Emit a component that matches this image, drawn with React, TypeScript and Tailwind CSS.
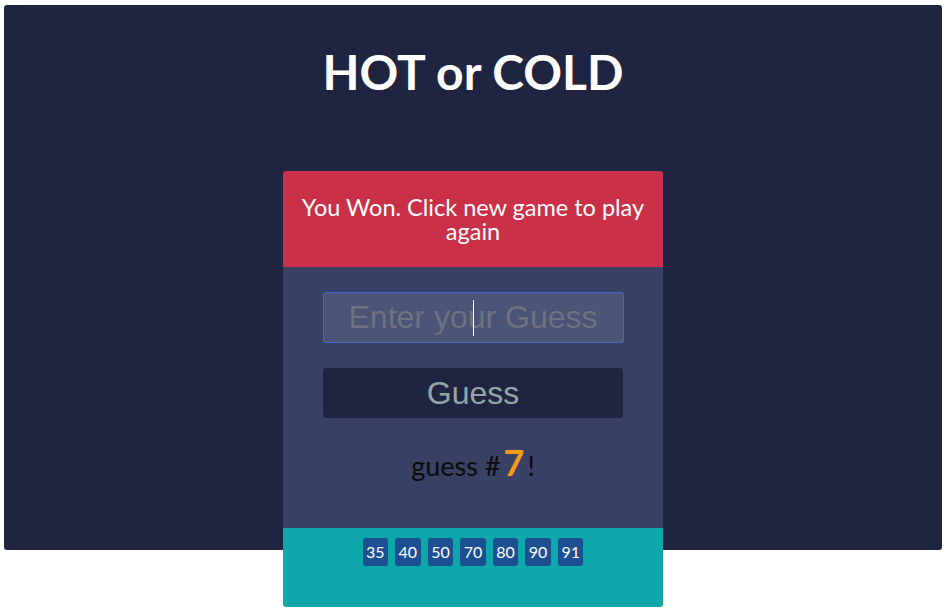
import React from "react";

export default function App() {
  const guesses = [35, 40, 50, 70, 80, 90, 91];
  return (
    <div className="min-h-[615px] w-[948px] bg-white pt-[5px] pl-[4px]" style={{ fontFamily: "Lato, 'Open Sans', sans-serif" }}>
      <div className="h-[545px] w-[938px] rounded-[3px] bg-[#1f2540] pt-[37px] flex flex-col items-center">
        <h1 className="shrink-0 text-[48px] leading-[60px] font-bold text-white text-center">HOT or COLD</h1>
        <div className="shrink-0 mt-[69px] w-[380px] rounded-[3px] overflow-hidden flex flex-col">
          <div className="shrink-0 h-[96px] bg-[#cb3049] flex items-center justify-center px-[16px]">
            <p className="text-[23.5px] leading-[24px] text-white text-center">You Won. Click new game to play again</p>
          </div>
          <div className="shrink-0 h-[261px] bg-[#394164] flex flex-col items-center pt-[25px]">
            <div className="relative w-[301px] h-[51px]">
              <input
                type="text"
                placeholder="Enter your Guess"
                className="w-full h-full rounded-[3px] border border-[#3d6ccc] bg-[#4c5578] text-center text-[32px] text-white placeholder:text-[#6e7281] caret-transparent outline-none"
                style={{ fontFamily: "'Liberation Sans', Arial, sans-serif" }}
              />
              <div className="absolute left-[150px] top-[8px] h-[36px] w-[1px] bg-white" />
            </div>
            <button
              className="mt-[25px] w-[300px] h-[50px] rounded-[3px] bg-[#1f2540] text-[32px] text-[#95a5a6] leading-none"
              style={{ fontFamily: "'Liberation Sans', Arial, sans-serif" }}
            >
              Guess
            </button>
            <div className="mt-[24px] h-[48px] leading-[48px] text-[27px] text-[#0a0a0a] text-center">
              guess #<span className="ml-[3px] mr-[3px] text-[36px] leading-none font-bold text-[#f39c12]">7</span>!
            </div>
          </div>
          <div className="shrink-0 h-[79px] bg-[#0fa8aa] pt-[10px] flex justify-center items-start gap-[7px]">
            {guesses.map((g) => (
              <span key={g} className="h-[28px] px-[3.5px] rounded-[3px] bg-[#1c5093] text-white text-[16px] leading-[28px]">
                {g}
              </span>
            ))}
          </div>
        </div>
      </div>
    </div>
  );
}
